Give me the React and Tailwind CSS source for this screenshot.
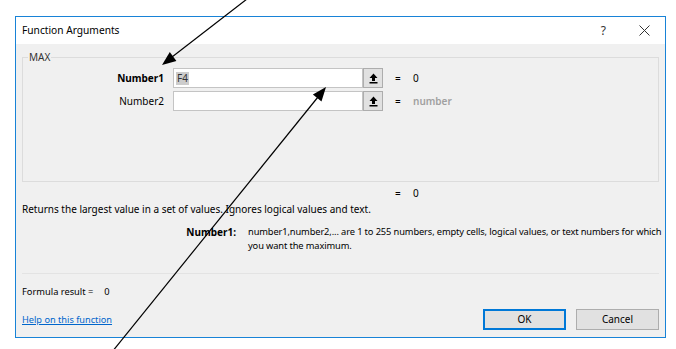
import React from 'react';

const font = { fontFamily: '"Noto Sans", "Open Sans", sans-serif' };

function UpButton() {
    return (
        <div className="w-[20px] h-[20px] border border-[#adadad] bg-[#e1e1e1] flex items-center justify-center">
            <svg width="9" height="11" viewBox="0 0 9 11">
                <path d="M4.5 0.5 L8.5 5 L6 5 L6 8 L3 8 L3 5 L0.5 5 Z" fill="#000" />
                <rect x="0.5" y="9" width="8" height="1.5" fill="#000" />
            </svg>
        </div>
    );
}

function ArgRow({ label, value, result, bold, muted }) {
    return (
        <div className="flex items-center h-[20px]">
            <div className={`w-[141px] text-right ${bold ? 'font-bold' : ''}`}>{label}</div>
            <div className="ml-[9px] w-[190px] h-[20px] bg-white border border-[#c4c4c4] flex items-center pl-[2px]">
                {value && <span className="bg-[#cccccc] text-[#333] px-[1px] leading-[13px]">{value}</span>}
            </div>
            <UpButton />
            <span className="ml-[12px] w-[18px]">=</span>
            <span className={muted ? 'text-[#a0a0a0] font-semibold' : ''}>{result}</span>
        </div>
    );
}

export default function App() {
    return (
        <div className="relative w-[676px] h-[349px] bg-white overflow-hidden text-[10px] text-black" style={font}>
            {/* Dialog */}
            <div className="ml-[15px] mt-[16px] w-[651px] h-[322px] border border-[#1883d7] flex flex-col">
                {/* Title bar */}
                <div className="h-[27px] bg-white flex items-center pl-[6px] pr-[15px] text-[10.2px]">
                    <span>Function Arguments</span>
                    <span className="ml-auto text-[12px] text-[#333]">?</span>
                    <svg className="ml-[33px]" width="11" height="11" viewBox="0 0 11 11">
                        <path d="M0.5 0.5 L10.5 10.5 M10.5 0.5 L0.5 10.5" stroke="#333" strokeWidth="1" />
                    </svg>
                </div>

                {/* Body */}
                <div className="flex-1 bg-[#f0f0f0] px-[6px] flex flex-col">
                    {/* Group box */}
                    <div className="relative mt-[13px] h-[125px] border border-[#dcdcdc] pt-[10px] flex flex-col gap-[3px]">
                        <span className="absolute left-[5px] top-[-8px] px-[1px] bg-[#f0f0f0] text-[#333] leading-[14px]">MAX</span>
                        <ArgRow label="Number1" value="F4" result="0" bold />
                        <ArgRow label="Number2" result="number" muted />
                    </div>

                    <div className="mt-[3px] h-[16px] flex items-center">
                        <span className="ml-[373px] w-[18px]">=</span>
                        <span>0</span>
                    </div>

                    <div className="h-[16px] flex items-center">
                        Returns the largest value in a set of values. Ignores logical values and text.
                    </div>

                    <div className="mt-[8px] flex leading-[14px]">
                        <div className="w-[214px] shrink-0 text-right font-bold">Number1:</div>
                        <div className="ml-[12px] w-[420px] shrink-0 text-[9.3px] tracking-[-0.12px]">
                            number1,number2,... are 1 to 255 numbers, empty cells, logical values, or text numbers for which you want the maximum.
                        </div>
                    </div>

                    <div className="mt-auto border-t border-[#e3e3e3]" />

                    <div className="mt-[11px] h-[14px] flex items-center text-[9.3px]">
                        <span>Formula result =</span>
                        <span className="ml-[11px]">0</span>
                    </div>

                    <div className="mt-[10px] mb-[7px] flex items-center">
                        <a href="#" className="text-[#0066cc] underline text-[9.2px]">Help on this function</a>
                        <button className="ml-auto w-[83px] h-[21px] bg-[#e1e1e1] border-2 border-[#0078d7]">OK</button>
                        <button className="ml-[10px] w-[83px] h-[21px] bg-[#e1e1e1] border border-[#adadad]">Cancel</button>
                    </div>
                </div>
            </div>

            {/* Annotation arrows */}
            <svg className="absolute inset-0 pointer-events-none" width="676" height="349" viewBox="0 0 676 349">
                <line x1="247" y1="-1" x2="172" y2="57" stroke="#000" strokeWidth="1.2" />
                <polygon points="162,65 176.4,60.9 169.8,52.1" fill="#000" />
                <line x1="112" y1="352" x2="318" y2="97" stroke="#000" strokeWidth="1.2" />
                <polygon points="326,87 321.5,101.4 312.9,94.5" fill="#000" />
            </svg>
        </div>
    );
}
